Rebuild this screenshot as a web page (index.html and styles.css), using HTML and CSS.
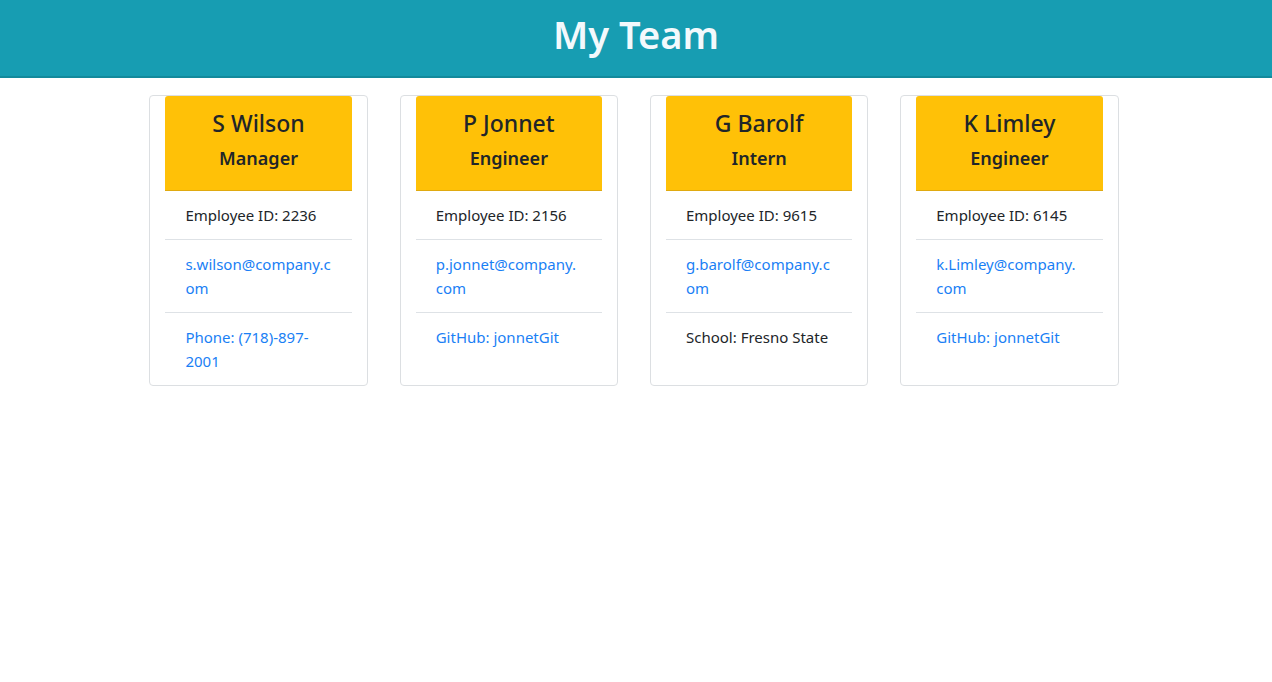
FILE: index.html
```html
<!DOCTYPE html>
<html lang="en">
<head>
<meta charset="utf-8">
<title>My Team</title>
<link rel="stylesheet" href="styles.css">
</head>
<body>
<header class="banner">
  <h1 class="banner-title">My Team</h1>
</header>
<main class="team">
  <div class="card">
    <div class="card-head">
      <h3 class="name">S Wilson</h3>
      <h5 class="role">Manager</h5>
    </div>
    <ul class="items">
      <li class="item">Employee ID: 2236</li>
      <li class="item"><a class="link" href="#">s.wilson@company.com</a></li>
      <li class="item"><a class="link" href="#">Phone: (718)-897-2001</a></li>
    </ul>
  </div>
  <div class="card">
    <div class="card-head">
      <h3 class="name">P Jonnet</h3>
      <h5 class="role">Engineer</h5>
    </div>
    <ul class="items">
      <li class="item">Employee ID: 2156</li>
      <li class="item"><a class="link" href="#">p.jonnet@company.com</a></li>
      <li class="item"><a class="link" href="#">GitHub: jonnetGit</a></li>
    </ul>
  </div>
  <div class="card">
    <div class="card-head">
      <h3 class="name">G Barolf</h3>
      <h5 class="role">Intern</h5>
    </div>
    <ul class="items">
      <li class="item">Employee ID: 9615</li>
      <li class="item"><a class="link" href="#">g.barolf@company.com</a></li>
      <li class="item">School: Fresno State</li>
    </ul>
  </div>
  <div class="card">
    <div class="card-head">
      <h3 class="name">K Limley</h3>
      <h5 class="role">Engineer</h5>
    </div>
    <ul class="items">
      <li class="item">Employee ID: 6145</li>
      <li class="item"><a class="link" href="#">k.Limley@company.com</a></li>
      <li class="item"><a class="link" href="#">GitHub: jonnetGit</a></li>
    </ul>
  </div>
</main>
</body>
</html>
```
FILE: styles.css
```css
* { box-sizing: border-box; }
body {
  margin: 0;
  font-family: "Noto Sans", "Open Sans", sans-serif;
  font-size: 15px;
  line-height: 24px;
  color: #212529;
  background: #fff;
}
.banner {
  height: 78px;
  background: #179db2;
  border-bottom: 2px solid #138a9c;
  display: flex;
  align-items: center;
  justify-content: center;
}
.banner-title {
  margin: 0;
  font-size: 38px;
  font-weight: 600;
  line-height: 1.2;
  color: #f3f9fc;
  padding-bottom: 7px;
}
.team {
  display: flex;
  justify-content: flex-start;
  gap: 32px;
  padding: 17px 0 0 149.4px;
}
.card {
  width: 218.3px;
  height: 291px;
  border: 1px solid #dcdfe2;
  border-radius: 4px;
  padding: 0 15px;
  flex: none;
}
.card-head {
  background: #ffc107;
  border-radius: 3px 3px 0 0;
  border-bottom: 1px solid #e0aa10;
  height: 95px;
  display: flex;
  flex-direction: column;
  align-items: center;
  padding-top: 11px;
}
.name {
  margin: 0;
  font-size: 23px;
  font-weight: 500;
  line-height: 32px;
}
.role {
  margin: 0;
  font-size: 18px;
  font-weight: 600;
  line-height: 28px;
  margin-top: 5px;
}
.items {
  list-style: none;
  margin: 0;
  padding: 0;
}
.item {
  padding: 12px 20px;
  border-bottom: 1px solid #dee2e6;
  overflow-wrap: break-word;
}
.item:last-child { border-bottom: 0; }
.link {
  color: #1a7ff5;
  text-decoration: none;
}
```
